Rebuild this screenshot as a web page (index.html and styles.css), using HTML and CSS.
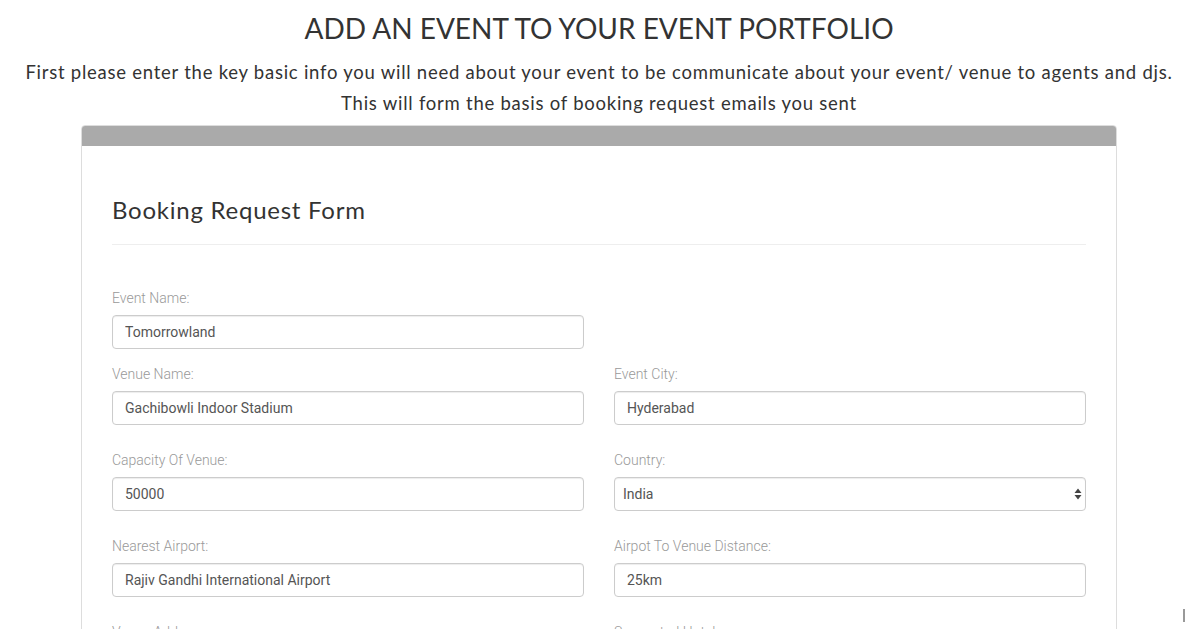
FILE: index.html
```html
<!DOCTYPE html>
<html>
<head>
<meta charset="utf-8">
<link rel="stylesheet" href="styles.css">
</head>
<body>
<div class="page">
  <h1 class="title">ADD AN EVENT TO YOUR EVENT PORTFOLIO</h1>
  <p class="intro">First please enter the key basic info you will need about your event to be communicate about your event/ venue to agents and djs.<br>This will form the basis of booking request emails you sent</p>
  <div class="panel">
    <div class="panel-head"></div>
    <div class="panel-body">
      <h3 class="form-title">Booking Request Form</h3>
      <hr class="divider">
      <div class="grid">
        <div class="group first">
          <label class="lbl">Event Name:</label>
          <input class="field" type="text" value="Tomorrowland">
        </div>
        <div class="group first"></div>
        <div class="group">
          <label class="lbl">Venue Name:</label>
          <input class="field" type="text" value="Gachibowli Indoor Stadium">
        </div>
        <div class="group">
          <label class="lbl">Event City:</label>
          <input class="field" type="text" value="Hyderabad">
        </div>
        <div class="group">
          <label class="lbl">Capacity Of Venue:</label>
          <input class="field" type="text" value="50000">
        </div>
        <div class="group">
          <label class="lbl">Country:</label>
          <div class="select-wrap">
            <select class="field select"><option>India</option></select>
            <svg class="arrows" width="8" height="12" viewBox="0 0 8 12"><path d="M4 0.5 L7.5 5 L0.5 5 Z M4 11.5 L7.5 7 L0.5 7 Z" fill="#444"/></svg>
          </div>
        </div>
        <div class="group">
          <label class="lbl">Nearest Airport:</label>
          <input class="field" type="text" value="Rajiv Gandhi International Airport">
        </div>
        <div class="group">
          <label class="lbl">Airpot To Venue Distance:</label>
          <input class="field" type="text" value="25km">
        </div>
        <div class="group">
          <label class="lbl">Venue Address:</label>
          <input class="field" type="text" value="">
        </div>
        <div class="group">
          <label class="lbl">Suggested Hotels:</label>
          <input class="field" type="text" value="">
        </div>
      </div>
    </div>
  </div>
</div>
<div class="edge-mark"></div>
</body>
</html>
```
FILE: styles.css
```css
html, body {
  margin: 0;
  padding: 0;
  background: #fff;
  overflow: hidden;
  height: 629px;
}
.page {
  padding-left: 13px;
  color: #333;
  font-family: "Lato", "Liberation Sans", sans-serif;
}
.title {
  margin: 12px 0 0;
  font-size: 28px;
  font-weight: 400;
  line-height: 33px;
  text-align: center;
}
.intro {
  margin: 12px 0 0;
  font-size: 18.5px;
  letter-spacing: 0.75px;
  line-height: 31px;
  text-align: center;
}
.panel {
  width: 1034px;
  margin: 6px auto 0;
  border: 1px solid #ddd;
  border-radius: 4px;
  overflow: hidden;
}
.panel-head {
  height: 20px;
  background: #aaa;
}
.panel-body {
  padding: 0 30px 30px;
}
.form-title {
  margin: 50px 0 0;
  font-size: 24px;
  font-weight: 400;
  letter-spacing: 0.75px;
  line-height: 27px;
}
.divider {
  margin: 21px 0 0;
  border: 0;
  border-top: 1px solid #eee;
  height: 0;
}
.grid {
  display: grid;
  grid-template-columns: 472px 472px;
  column-gap: 30px;
  margin-top: 43px;
}
.group {
  margin-bottom: 25px;
  font-family: "Roboto", "Liberation Sans", sans-serif;
}
.group.first {
  margin-bottom: 15px;
}
.lbl {
  display: block;
  font-size: 14px;
  font-weight: 300;
  line-height: 20px;
  color: #999;
  margin-bottom: 7px;
}
.field {
  display: block;
  box-sizing: border-box;
  width: 100%;
  height: 34px;
  padding: 6px 12px;
  font-family: "Roboto", "Liberation Sans", sans-serif;
  font-size: 14px;
  color: #555;
  background: #fff;
  border: 1px solid #ccc;
  border-radius: 4px;
  box-shadow: inset 0 1px 1px rgba(0,0,0,.075);
  outline: none;
}
.select-wrap {
  position: relative;
}
.select {
  -webkit-appearance: none;
  appearance: none;
  padding-left: 8px;
}
.arrows {
  position: absolute;
  right: 4px;
  top: 11px;
}
.edge-mark {
  position: absolute;
  left: 1183px;
  top: 609px;
  width: 2px;
  height: 13px;
  background: #999;
}
```
